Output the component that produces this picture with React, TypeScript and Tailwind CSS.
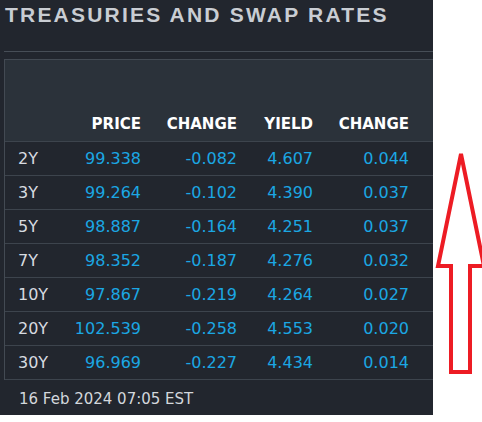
const rows = [
  { term: '2Y', price: '99.338', change: '-0.082', yield: '4.607', yieldChange: '0.044' },
  { term: '3Y', price: '99.264', change: '-0.102', yield: '4.390', yieldChange: '0.037' },
  { term: '5Y', price: '98.887', change: '-0.164', yield: '4.251', yieldChange: '0.037' },
  { term: '7Y', price: '98.352', change: '-0.187', yield: '4.276', yieldChange: '0.032' },
  { term: '10Y', price: '97.867', change: '-0.219', yield: '4.264', yieldChange: '0.027' },
  { term: '20Y', price: '102.539', change: '-0.258', yield: '4.553', yieldChange: '0.020' },
  { term: '30Y', price: '96.969', change: '-0.227', yield: '4.434', yieldChange: '0.014' },
];

const cols = 'grid grid-cols-[60px_76px_96px_76px_96px_1fr] items-center';

export default function App() {
  return (
    <div className="flex w-[482px] h-[422px] bg-white">
      <div className="w-[433px] h-[415px] bg-[#22262e] flex flex-col overflow-hidden">
        {/* Title */}
        <div className="h-[51px] pl-[5px] pt-[3px]">
          <h1 className="font-['Liberation_Sans',Arial,sans-serif] font-bold text-[21px] leading-[24px] tracking-[2.2px] text-[#c9cdd3] whitespace-nowrap">
            TREASURIES AND SWAP RATES
          </h1>
        </div>
        <div className="ml-[4px] h-px bg-[#474e57]" />
        <div className="h-[7px]" />

        {/* Table */}
        <div className="ml-[4px] border-l border-t border-[#434a53] font-['DejaVu_Sans',Verdana,sans-serif]">
          <div className={`${cols} h-[81px] bg-[#2b323a] items-end pb-[6px] text-[15px] font-bold text-white`}>
            <div />
            <div className="text-right">PRICE</div>
            <div className="text-right">CHANGE</div>
            <div className="text-right">YIELD</div>
            <div className="text-right">CHANGE</div>
            <div />
          </div>
          {rows.map(row => (
            <div key={row.term} className={`${cols} h-[34px] border-t border-[#3d444d] text-[16px] text-[#1ba7e3]`}>
              <div className="pl-[13px] text-[#d7dbe0]">{row.term}</div>
              <div className="text-right">{row.price}</div>
              <div className="text-right">{row.change}</div>
              <div className="text-right">{row.yield}</div>
              <div className="text-right">{row.yieldChange}</div>
              <div />
            </div>
          ))}
          <div className="h-px bg-[#3d444d]" />
        </div>

        {/* Footer */}
        <div className="pl-[19px] pt-[8px] font-['DejaVu_Sans',Verdana,sans-serif] text-[15px] text-[#d3d7dc]">
          16 Feb 2024 07:05 EST
        </div>
      </div>

      <svg width="49" height="422" viewBox="433 0 49 422" className="block">
        <path
          d="M461 154 L438 266 L451 266 L451 372 L470 372 L470 266 L484 266 Z"
          fill="none"
          stroke="#ed1c24"
          strokeWidth="4"
          strokeLinejoin="miter"
        />
      </svg>
    </div>
  );
}
